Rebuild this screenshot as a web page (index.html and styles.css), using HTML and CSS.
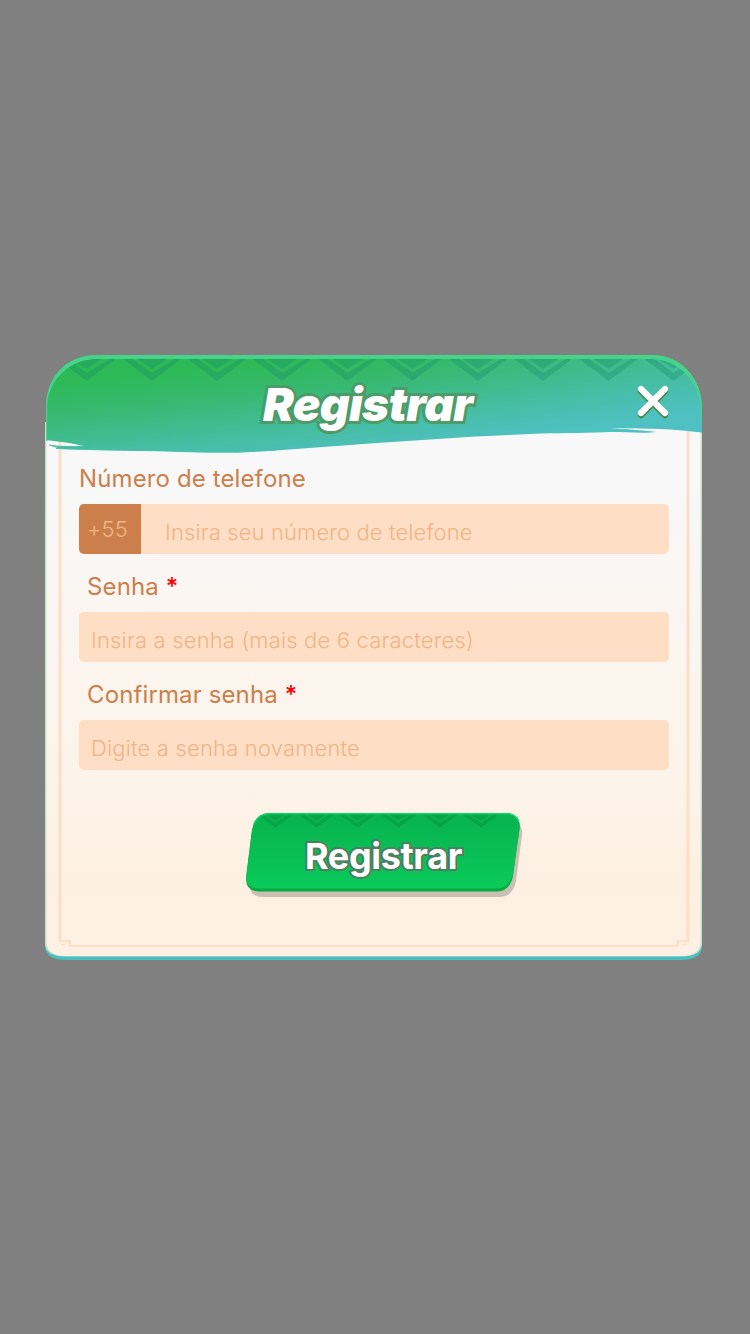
FILE: index.html
```html
<!DOCTYPE html>
<html lang="pt-BR">
<head>
<meta charset="utf-8">
<title>Registrar</title>
<link rel="stylesheet" href="styles.css">
</head>
<body>
<main class="dialog">
  <svg class="dialog-art" viewBox="45 354 657 606" aria-hidden="true">
    <defs>
      <linearGradient id="paper" x1="0" y1="0" x2="0" y2="1">
        <stop offset="0" stop-color="#f8f8f8"/><stop offset=".12" stop-color="#f8f8f8"/><stop offset=".28" stop-color="#faf6f3"/><stop offset=".65" stop-color="#fcf4ea"/><stop offset=".85" stop-color="#fdf0e2"/><stop offset="1" stop-color="#fef0e2"/>
      </linearGradient>
      <linearGradient id="head" gradientUnits="userSpaceOnUse" x1="300" y1="358" x2="310" y2="456">
        <stop offset="0" stop-color="#2eb957"/><stop offset=".3" stop-color="#36b96f"/><stop offset=".9" stop-color="#4bbfb4"/><stop offset="1" stop-color="#4cc0bb"/>
      </linearGradient>
      <linearGradient id="tint" x1="0" y1="0" x2="1" y2="0">
        <stop offset=".5" stop-color="#54c2d8" stop-opacity="0"/><stop offset="1" stop-color="#54c2d8" stop-opacity=".28"/>
      </linearGradient>
      <clipPath id="headClip"><path d="M46 440V410C46 378 66 357 97 357H651C680 357 701 379 701 408V440Z"/></clipPath>
      <path id="zig" d="M-29 359 0 381 29 359H23L0 373-19 359ZM-15 359 0 369 15 359Z"/>
      <path id="wave" d="M46 440V410C46 377 66 355 97 355H651C681 355 702 378 702 408V432.500C690 431 676 429.500 660 429C640 428 622 428 608 428.500C627 429 640 430 656 432C645 433.500 630 432 610 432C590 433 565 433 540 433.500L475 436.500L370 443.500L276 450.500C240 453 215 453 198 452C150 450 105 451 61 449L49 445.500C58 446.500 70 447 84 446Q66 442 46 440Z"/>
    </defs>
    <path d="M45 422H702V946Q702 960 680 960H67Q45 960 45 946Z" fill="#4ac0c0"/>
    <path d="M45 422H702V943Q702 956.500 681 956.500H66Q45 956.500 45 943Z" fill="#c9dfd2"/>
    <path d="M46.500 422H700.500V943Q699 956 681 956H66Q48 956 46.500 943Z" fill="url(#paper)"/>
    <g fill="none" stroke="#fedec5">
      <path d="M60 430V941M688 430V941" stroke-width="3"/>
      <path d="M59 941H70V946H678V941H689" stroke-width="2"/>
      <path d="M61 944.500H65M683 944.500H687" stroke-width="1.500"/>
    </g>
    <use href="#wave" fill="url(#head)"/>
    <use href="#wave" fill="url(#tint)"/>
    <path d="M49 445Q64 447.500 82 446" fill="none" stroke="#4cbfae" stroke-width="1.200"/>
    <path d="M56 448.500C105 450.500 150 450 198 452Q237 453 276 450" fill="none" stroke="#4bc0b2"/>
    <g clip-path="url(#headClip)" fill="#168f68" fill-opacity=".36">
      <use href="#zig" x="86.500"/><use href="#zig" x="152"/><use href="#zig" x="217"/><use href="#zig" x="282"/><use href="#zig" x="347.500"/><use href="#zig" x="412.500"/><use href="#zig" x="478"/><use href="#zig" x="543"/><use href="#zig" x="608.500"/><use href="#zig" x="673.500"/>
    </g>
    <path d="M46 441V405C47 377 66 355 97 355H651C681 355 702 378 702 408V418H701V408C699 381 678 359 651 359H97C69 359 49 380 47.200 405V441Z" fill="#48d38a"/>
  </svg>
  <header class="dialog-head">
    <h1 class="title">Registrar</h1>
    <button class="close" type="button" aria-label="Fechar">
      <svg width="32" height="36" viewBox="0 0 32 36" fill="none" stroke-linecap="round" stroke-width="6.200">
        <path d="M4 6.200 28 30.200M28 6.200 4 30.200" stroke="#478b49"/>
        <path d="M4 4 28 28M28 4 4 28" stroke="#fff"/>
      </svg>
    </button>
  </header>
  <form class="form">
    <div class="label label-phone">Número de telefone</div>
    <div class="field phone"><span class="prefix">+55</span><span class="placeholder">Insira seu número de telefone</span></div>
    <div class="label">Senha <span class="required">*</span></div>
    <div class="field"><span class="placeholder wide">Insira a senha (mais de 6 caracteres)</span></div>
    <div class="label">Confirmar senha <span class="required">*</span></div>
    <div class="field"><span class="placeholder wide">Digite a senha novamente</span></div>
    <button class="submit" type="button">
      <svg class="submit-art" viewBox="245 812 280 88" aria-hidden="true">
        <defs>
          <linearGradient id="green" x1="0" y1="0" x2="0" y2="1"><stop offset="0" stop-color="#08b24f"/><stop offset="1" stop-color="#0aca5a"/></linearGradient>
          <path id="chev" d="M-18 814.500 0 827.500 18 814.500H13L0 823-13 814.500ZM-9 814.500 0 820.500 9 814.500Z"/>
          <path id="face" d="M269 813H506Q521 814 519.500 829L513 873Q510 888 497 888.500H259Q246 888 246 877L252 830Q255 814 269 813Z"/>
          <clipPath id="faceClip"><use href="#face"/></clipPath>
        </defs>
        <path d="M270 820H507Q524 822 522 835L516 881Q513 897 499 897H262Q252 897 249 887Z" fill="#cbbfb5"/>
        <path d="M269 813H506Q521 814 519.500 829L513 876Q510 891 497 891.500H259Q246 891 246 879L252 830Q255 814 269 813Z" fill="#06a93d"/>
        <use href="#face" fill="url(#green)"/>
        <g fill="#07a444" clip-path="url(#faceClip)"><use href="#chev" x="275.500"/><use href="#chev" x="316.500"/><use href="#chev" x="357.500"/><use href="#chev" x="398.500"/><use href="#chev" x="440"/><use href="#chev" x="481"/></g>
        <path d="M254 824Q258 814 269 813.700H506Q517 814 519 823" fill="none" stroke="#0bd36b" stroke-width="1.500"/>
      </svg>
      <span class="submit-text">Registrar</span>
    </button>
  </form>
</main>
</body>
</html>
```
FILE: styles.css
```css
* { box-sizing: border-box; }
body {
  margin: 0;
  min-height: 1334px;
  padding: 354px 48px 0 45px;
  background: #808080;
  font-family: Inter, "Liberation Sans", sans-serif;
}
.dialog { position: relative; width: 657px; height: 606px; }
.dialog-art { position: absolute; inset: 0; width: 657px; height: 606px; }
.dialog-head {
  position: relative;
  display: flex;
  justify-content: space-between;
  height: 106px;
  padding: 31px 33px 0 218px;
}
.title {
  margin: -8px 0 0;
  color: #fff;
  font-size: 46px;
  line-height: 55px;
  font-weight: 900;
  font-style: italic;
  letter-spacing: -0.6px;
  -webkit-text-stroke: 6px #4c9b68;
  paint-order: stroke fill;
}
.close, .submit { border: 0; padding: 0; background: none; font-family: inherit; }
.close { width: 32px; height: 36px; }
.close svg { display: block; }
.form { position: relative; padding: 0 33px 0 34px; }
.label {
  height: 58px;
  padding-left: 8px;
  padding-top: 18px;
  color: #cd7f4b;
  font-size: 24px;
  line-height: 30px;
  font-weight: 400;
  letter-spacing: 0.12px;
}
.label-phone { height: 44px; padding-left: 0; padding-top: 4px; }
.required { color: #f00; font-weight: 500; }
.field {
  display: flex;
  height: 50px;
  padding-left: 12px;
  border-radius: 5px;
  background: #fedec5;
  color: #f0b586;
  font-size: 22px;
  font-weight: 300;
  line-height: 56px;
  letter-spacing: 0.12px;
  overflow: hidden;
}
.wide { letter-spacing: 0.17px; }
.phone { padding-left: 0; gap: 24px; }
.prefix { width: 62px; background: #cd7f4b; line-height: 50px; padding-left: 8px; }
.submit {
  position: relative;
  display: block;
  width: 280px;
  height: 88px;
  margin: 42px 0 0 166px;
}
.submit-art { position: absolute; inset: 0; width: 280px; height: 88px; }
.submit-text {
  position: relative;
  display: block;
  color: #fff;
  font-size: 36px;
  font-weight: 700;
  line-height: 44px;
  letter-spacing: -0.35px;
  margin: -1px 3px 0 0;
  -webkit-text-stroke: 4px #4b8060;
  paint-order: stroke fill;
}
```
